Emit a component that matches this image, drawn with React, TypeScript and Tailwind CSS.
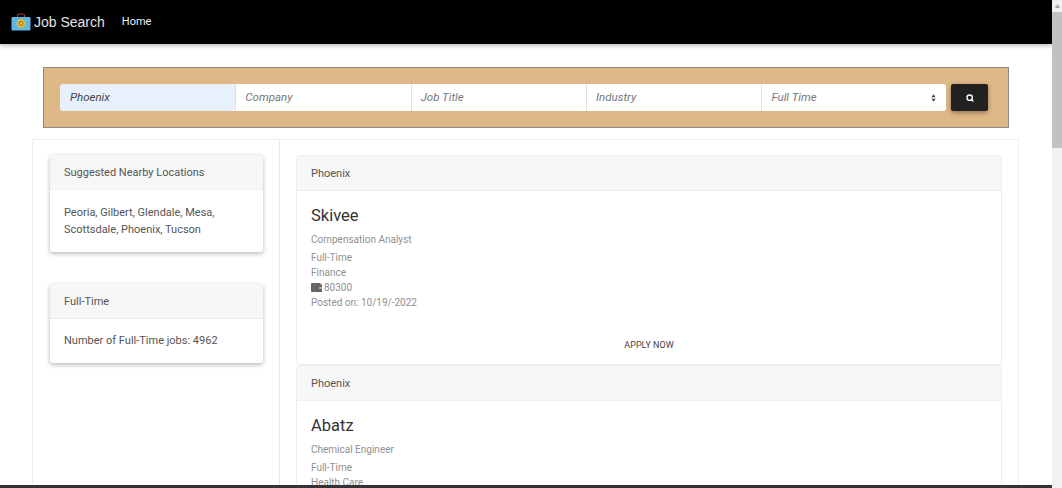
import React from "react";
import { Search } from "lucide-react";

const JobIcon = () => (
  <svg width="20" height="18" viewBox="0 0 20 18">
    <path d="M6.5 5V2.2Q6.5 1 8 1H12Q13.5 1 13.5 2.2V5" fill="none" stroke="#9c4038" strokeWidth="1.2" />
    <rect x="0.5" y="4" width="19" height="13.5" rx="1" fill="#62b6e4" />
    <circle cx="10" cy="10.5" r="4.4" fill="#e9bb35" />
    <circle cx="10" cy="10.5" r="2.4" fill="#8a7a38" />
    <circle cx="10" cy="10.5" r="1.2" fill="#f4d35e" />
  </svg>
);

const WalletIcon = () => (
  <svg width="11" height="9" viewBox="0 0 11 9">
    <path d="M1 0H9.5V1.5H11V9H1Q0 9 0 8V1Q0 0 1 0Z" fill="#666" />
    <rect x="8" y="4" width="3" height="2" fill="#aaa" />
  </svg>
);

const fields = ["Company", "Job Title", "Industry"];

const SideCard = ({ title, children, className }: { title: string; children: React.ReactNode; className?: string }) => (
  <div className={`w-[213px] rounded-[3px] bg-white shadow-[0_2px_5px_rgba(0,0,0,0.2),0_1px_4px_rgba(0,0,0,0.1)] ${className ?? ""}`}>
    <div className="flex h-[35px] items-center border-b border-[#eeeeee] bg-[#f7f7f7] px-[14px] pt-[3px] text-[11px] text-[#555]">{title}</div>
    {children}
  </div>
);

const JobCard = ({ name, role, industry, salary, posted, apply }: { name: string; role: string; industry: string; salary?: string; posted?: string; apply?: boolean }) => (
  <div className="rounded-[3px] border border-[#eeeeee] bg-white">
    <div className="flex h-[35px] items-center border-b border-[#eeeeee] bg-[#f7f7f7] px-[14px] pt-[2px] text-[11px] text-[#555]">Phoenix</div>
    <div className="px-[14px] pt-[13px]">
      <div className="text-[16.5px] leading-[24px] text-[#333]">{name}</div>
      <div className="mt-[4px] text-[10px] leading-[15px] text-[#909090]">{role}</div>
      <div className="mt-[3px] text-[10px] leading-[15px] text-[#909090]">
        <div>Full-Time</div>
        <div>{industry}</div>
        {salary && (
          <div className="flex items-center gap-[2px]">
            <WalletIcon />
            {salary}
          </div>
        )}
        {posted && <div>{posted}</div>}
      </div>
    </div>
    {apply && <div className="mt-[29px] pb-[12px] text-center text-[9px] leading-[13px] text-[#444]">APPLY NOW</div>}
  </div>
);

export default function App() {
  return (
    <div className="flex h-[488px] w-[1062px] overflow-hidden bg-white font-['Roboto',sans-serif]">
      <div className="flex w-[1052px] flex-col">
        <div className="h-[485px] overflow-hidden">
          <nav className="flex h-[44px] items-center bg-black pl-[11px] shadow-[0_2px_4px_rgba(0,0,0,0.25)]">
            <JobIcon />
            <span className="ml-[3px] pt-[1px] font-['Liberation_Sans',sans-serif] text-[14px] text-[#e4e4e4]">Job Search</span>
            <span className="ml-[17px] pt-[1px] text-[11px] text-[#eee]">Home</span>
          </nav>

          <form className="mx-[43px] mt-[23px] flex h-[61px] w-[966px] items-center border border-[#8f8a80] bg-[#dfb887] pl-[16px]">
            <div className="flex h-[27px] w-[175.3px] items-center rounded-l-[3px] bg-[#e8f0fe] pl-[10px] text-[11.5px] italic text-[#444]">Phoenix</div>
            {fields.map((f) => (
              <div key={f} className="flex h-[27px] w-[175.4px] items-center border-l border-[#e8e0d4] bg-white pl-[9px] text-[11.5px] italic text-[#777]">{f}</div>
            ))}
            <div className="flex h-[27px] w-[184.5px] items-center justify-between rounded-r-[3px] border-l border-[#e8e0d4] bg-white pl-[9px] pr-[10px] text-[11.5px] italic text-[#777]">
              Full Time
              <svg width="5" height="8" viewBox="0 0 6 9">
                <path d="M3 0L5.5 3.5H.5ZM3 9L.5 5.5H5.5Z" fill="#444" />
              </svg>
            </div>
            <button type="button" className="ml-[5px] flex h-[27px] w-[37.5px] items-center justify-center rounded-[2px] bg-[#212121] shadow-[0_2px_5px_rgba(0,0,0,0.35)]">
              <Search size={8} stroke="#fff" strokeWidth={4} />
            </button>
          </form>

          <div className="ml-[32px] mt-[11px] flex h-[400px] w-[987px] border border-[#f0f0f0]">
            <aside className="w-[247px] shrink-0 border-r border-[#e8e8e8] pl-[17px] pt-[15px]">
              <SideCard title="Suggested Nearby Locations">
                <div className="h-[62px] px-[14px] pt-[14px] text-[11px] leading-[17px] text-[#555]">
                  Peoria, Gilbert, Glendale, Mesa,
                  <br />
                  Scottsdale, Phoenix, Tucson
                </div>
              </SideCard>
              <SideCard title="Full-Time" className="mt-[32px]">
                <div className="h-[44px] px-[14px] pt-[14px] text-[11px] leading-[16px] text-[#555]">Number of Full-Time jobs: 4962</div>
              </SideCard>
            </aside>
            <main className="flex-1 px-[16px] pt-[15px]">
              <JobCard name="Skivee" role="Compensation Analyst" industry="Finance" salary="80300" posted="Posted on: 10/19/-2022" apply />
              <JobCard name="Abatz" role="Chemical Engineer" industry="Health Care" />
            </main>
          </div>
        </div>
        <div className="h-[3px] bg-[#333]" />
      </div>

      <div className="flex w-[10px] flex-col bg-[#f1f1f1]">
        <div className="flex h-[12px] items-center justify-center">
          <svg width="5" height="4" viewBox="0 0 5 4"><path d="M2.5 0L5 4H0Z" fill="#aaa" /></svg>
        </div>
        <div className="h-[136px] bg-[#c1c1c1]" />
      </div>
    </div>
  );
}
